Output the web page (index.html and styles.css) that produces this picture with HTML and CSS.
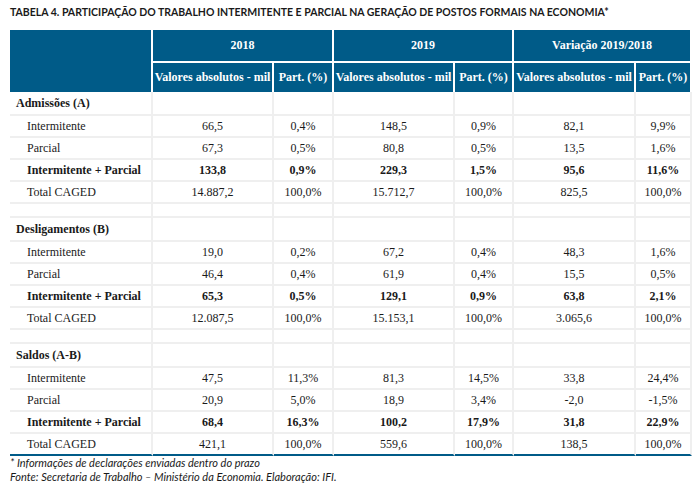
FILE: index.html
```html
<!DOCTYPE html>
<html lang="pt">
<head>
<meta charset="utf-8">
<link rel="stylesheet" href="styles.css">
</head>
<body>
<h1 class="title">TABELA 4. PARTICIPAÇÃO DO TRABALHO INTERMITENTE E PARCIAL NA GERAÇÃO DE POSTOS FORMAIS NA ECONOMIA*</h1>
<table class="tbl">
  <colgroup>
    <col class="c-label"><col class="c-val"><col class="c-pct"><col class="c-val"><col class="c-pct2"><col class="c-val2"><col class="c-pct3">
  </colgroup>
  <thead>
    <tr class="hrow1">
      <th rowspan="2" class="hcorner"></th>
      <th colspan="2">2018</th>
      <th colspan="2">2019</th>
      <th colspan="2">Variação 2019/2018</th>
    </tr>
    <tr class="hrow2">
      <th>Valores absolutos - mil</th><th>Part. (%)</th>
      <th>Valores absolutos - mil</th><th>Part. (%)</th>
      <th>Valores absolutos - mil</th><th>Part. (%)</th>
    </tr>
  </thead>
  <tbody>
    <tr class="sec"><td class="lab">Admissões (A)</td><td></td><td></td><td></td><td></td><td></td><td></td></tr>
    <tr><td class="sub">Intermitente</td><td>66,5</td><td>0,4%</td><td>148,5</td><td>0,9%</td><td>82,1</td><td>9,9%</td></tr>
    <tr><td class="sub">Parcial</td><td>67,3</td><td>0,5%</td><td>80,8</td><td>0,5%</td><td>13,5</td><td>1,6%</td></tr>
    <tr class="bold"><td class="sub">Intermitente + Parcial</td><td>133,8</td><td>0,9%</td><td>229,3</td><td>1,5%</td><td>95,6</td><td>11,6%</td></tr>
    <tr><td class="sub">Total CAGED</td><td>14.887,2</td><td>100,0%</td><td>15.712,7</td><td>100,0%</td><td>825,5</td><td>100,0%</td></tr>
    <tr class="gap"><td></td><td></td><td></td><td></td><td></td><td></td><td></td></tr>
    <tr class="sec"><td class="lab">Desligamentos (B)</td><td></td><td></td><td></td><td></td><td></td><td></td></tr>
    <tr><td class="sub">Intermitente</td><td>19,0</td><td>0,2%</td><td>67,2</td><td>0,4%</td><td>48,3</td><td>1,6%</td></tr>
    <tr><td class="sub">Parcial</td><td>46,4</td><td>0,4%</td><td>61,9</td><td>0,4%</td><td>15,5</td><td>0,5%</td></tr>
    <tr class="bold"><td class="sub">Intermitente + Parcial</td><td>65,3</td><td>0,5%</td><td>129,1</td><td>0,9%</td><td>63,8</td><td>2,1%</td></tr>
    <tr><td class="sub">Total CAGED</td><td>12.087,5</td><td>100,0%</td><td>15.153,1</td><td>100,0%</td><td>3.065,6</td><td>100,0%</td></tr>
    <tr class="gap"><td></td><td></td><td></td><td></td><td></td><td></td><td></td></tr>
    <tr class="sec"><td class="lab">Saldos (A-B)</td><td></td><td></td><td></td><td></td><td></td><td></td></tr>
    <tr><td class="sub">Intermitente</td><td>47,5</td><td>11,3%</td><td>81,3</td><td>14,5%</td><td>33,8</td><td>24,4%</td></tr>
    <tr><td class="sub">Parcial</td><td>20,9</td><td>5,0%</td><td>18,9</td><td>3,4%</td><td>-2,0</td><td>-1,5%</td></tr>
    <tr class="bold"><td class="sub">Intermitente + Parcial</td><td>68,4</td><td>16,3%</td><td>100,2</td><td>17,9%</td><td>31,8</td><td>22,9%</td></tr>
    <tr class="last"><td class="sub">Total CAGED</td><td>421,1</td><td>100,0%</td><td>559,6</td><td>100,0%</td><td>138,5</td><td>100,0%</td></tr>
  </tbody>
</table>
<p class="note">* Informações de declarações enviadas dentro do prazo</p>
<p class="note">Fonte: Secretaria de Trabalho – Ministério da Economia. Elaboração: IFI.</p>
</body>
</html>
```

FILE: styles.css
```css
html, body {
  margin: 0;
  padding: 0;
  background: #ffffff;
}
body {
  padding: 5px 6px 0 10px;
  color: #1a1a1a;
}
.title {
  margin: 0 0 11px 0;
  font-family: Lato, "Liberation Sans", sans-serif;
  font-weight: 700;
  font-size: 10.5px;
  line-height: 14px;
  color: #1a1a1a;
  white-space: nowrap;
}
.tbl {
  border-collapse: separate;
  border-spacing: 0;
  table-layout: fixed;
  width: 682px;
  font-family: "Liberation Serif", serif;
  font-size: 12px;
}
.c-label { width: 143px; }
.c-val { width: 121px; }
.c-pct { width: 60px; }
.c-pct2 { width: 59px; }
.c-val2 { width: 122px; }
.c-pct3 { width: 56px; }

.tbl th {
  background: #005b88;
  color: #ffffff;
  font-weight: 700;
  padding: 0;
  text-align: center;
  box-sizing: border-box;
  border-right: 2px solid #ffffff;
  white-space: nowrap;
}
.hrow1 th {
  height: 33px;
  border-bottom: 2px solid #ffffff;
}
.hrow1 th.hcorner {
  border-bottom: none;
}
.hrow2 th {
  height: 29px;
}
.tbl td {
  box-sizing: border-box;
  height: 22px;
  padding: 0;
  text-align: center;
  vertical-align: middle;
  border-right: 2px solid #efefef;
  border-bottom: 2px solid #efefef;
  white-space: nowrap;
}
.tbl td.lab {
  text-align: left;
  padding-left: 6px;
  font-weight: 700;
}
.tbl td.sub {
  text-align: left;
  padding-left: 17px;
}
.tbl tr.sec td {
  height: 24px;
}
.tbl tr.gap td {
  height: 14px;
}
.tbl tr.bold td {
  font-weight: 700;
}
.tbl tr.last td {
  border-bottom: 2px solid #005b88;
}
.note {
  margin: 0;
  font-family: Lato, "Liberation Sans", sans-serif;
  font-style: italic;
  font-size: 11px;
  line-height: 14px;
  color: #1a1a1a;
}
```
